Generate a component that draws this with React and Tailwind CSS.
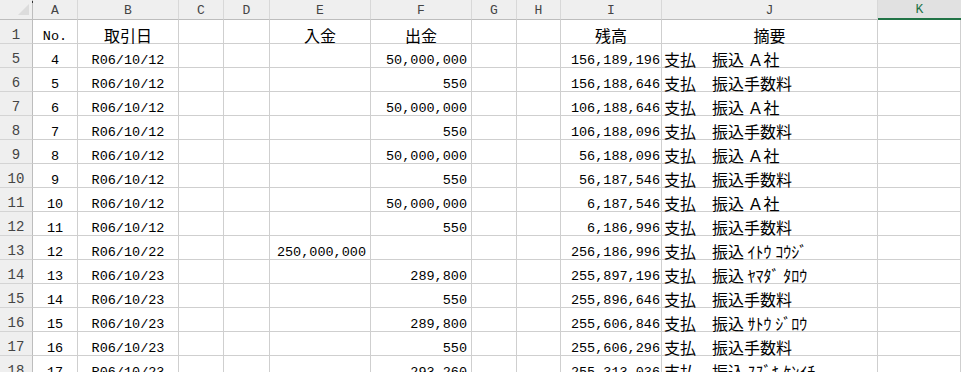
import React from "react";

const COLS =
  "grid grid-cols-[33px_45px_101px_45px_46px_101px_101px_45px_44px_101px_216px_1fr]";

const rows = [
  ["5", "4", "R06/10/12", "", "50,000,000", "156,189,196", "支払　振込 Ａ社"],
  ["6", "5", "R06/10/12", "", "550", "156,188,646", "支払　振込手数料"],
  ["7", "6", "R06/10/12", "", "50,000,000", "106,188,646", "支払　振込 Ａ社"],
  ["8", "7", "R06/10/12", "", "550", "106,188,096", "支払　振込手数料"],
  ["9", "8", "R06/10/12", "", "50,000,000", "56,188,096", "支払　振込 Ａ社"],
  ["10", "9", "R06/10/12", "", "550", "56,187,546", "支払　振込手数料"],
  ["11", "10", "R06/10/12", "", "50,000,000", "6,187,546", "支払　振込 Ａ社"],
  ["12", "11", "R06/10/12", "", "550", "6,186,996", "支払　振込手数料"],
  ["13", "12", "R06/10/22", "250,000,000", "", "256,186,996", "支払　振込 ｲﾄｳ ｺｳｼﾞ"],
  ["14", "13", "R06/10/23", "", "289,800", "255,897,196", "支払　振込 ﾔﾏﾀﾞ ﾀﾛｳ"],
  ["15", "14", "R06/10/23", "", "550", "255,896,646", "支払　振込手数料"],
  ["16", "15", "R06/10/23", "", "289,800", "255,606,846", "支払　振込 ｻﾄｳ ｼﾞﾛｳ"],
  ["17", "16", "R06/10/23", "", "550", "255,606,296", "支払　振込手数料"],
  ["18", "17", "R06/10/23", "", "293,260", "255,313,036", "支払　振込 ｽｽﾞｷ ｹﾝｲﾁ"],
];

const cell = "border-r border-b border-[#cfcfcf] flex items-end leading-none whitespace-nowrap";
const jp = "font-['Noto_Sans_CJK_JP',sans-serif] text-[16px] leading-[16px]";

function ColHead({ children, active }) {
  if (active) {
    return (
      <div className="bg-[#e1e1e1] border-b-2 border-b-[#217346] flex items-end justify-center pb-[2px] text-[#217346] text-[13px] leading-none">
        {children}
      </div>
    );
  }
  return (
    <div className="bg-[#efefef] border-r border-r-[#d8d8d8] border-b border-b-[#bdbdbd] flex items-end justify-center pb-[2px] text-[#444444] text-[13px] leading-none">
      {children}
    </div>
  );
}

function RowHead({ children }) {
  return (
    <div className="bg-[#efefef] border-r border-r-[#bdbdbd] border-b border-b-[#d4d4d4] flex items-end justify-center pb-[1px] text-[#444444] text-[14px] leading-none">
      {children}
    </div>
  );
}

export default function App() {
  return (
    <div className="relative w-[961px] h-[372px] overflow-hidden bg-white text-black font-['Liberation_Mono',monospace] text-[13.5px]">
      <div className={`${COLS} h-[20px]`}>
        <div className="bg-[#efefef] border-r border-r-[#bdbdbd] border-b border-b-[#bdbdbd] flex items-end justify-end pr-[3px] pb-[4px]">
          <svg width="11" height="11" viewBox="0 0 11 11">
            <polygon points="11,0 11,11 0,11" fill="#dcdcdc" />
          </svg>
        </div>
        {["A", "B", "C", "D", "E", "F", "G", "H", "I", "J"].map((c) => (
          <ColHead key={c}>{c}</ColHead>
        ))}
        <ColHead active>K</ColHead>
      </div>

      <div className={`${COLS} h-[24px]`}>
        <RowHead>1</RowHead>
        <div className={`${cell} justify-center`}>No.</div>
        <div className={`${cell} justify-center`}>
          <span className={jp}>取引日</span>
        </div>
        <div className={cell}></div>
        <div className={cell}></div>
        <div className={`${cell} justify-center`}>
          <span className={jp}>入金</span>
        </div>
        <div className={`${cell} justify-center`}>
          <span className={jp}>出金</span>
        </div>
        <div className={cell}></div>
        <div className={cell}></div>
        <div className={`${cell} justify-center`}>
          <span className={jp}>残高</span>
        </div>
        <div className={`${cell} justify-center`}>
          <span className={jp}>摘要</span>
        </div>
        <div className={cell}></div>
      </div>

      {rows.map((r) => (
        <div key={r[0]} className={`${COLS} h-[24px]`}>
          <RowHead>{r[0]}</RowHead>
          <div className={`${cell} justify-center`}>{r[1]}</div>
          <div className={`${cell} justify-center`}>{r[2]}</div>
          <div className={cell}></div>
          <div className={cell}></div>
          <div className={`${cell} justify-end pr-[4px]`}>{r[3]}</div>
          <div className={`${cell} justify-end pr-[4px]`}>{r[4]}</div>
          <div className={cell}></div>
          <div className={cell}></div>
          <div className={`${cell} justify-end pr-[1px]`}>{r[5]}</div>
          <div className={`${cell} pl-[2px]`}>
            <span className={jp}>{r[6]}</span>
          </div>
          <div className={cell}></div>
        </div>
      ))}

      <div className="absolute left-[32px] top-[1px] w-[1px] h-[2px] bg-[#333333]" />
    </div>
  );
}
